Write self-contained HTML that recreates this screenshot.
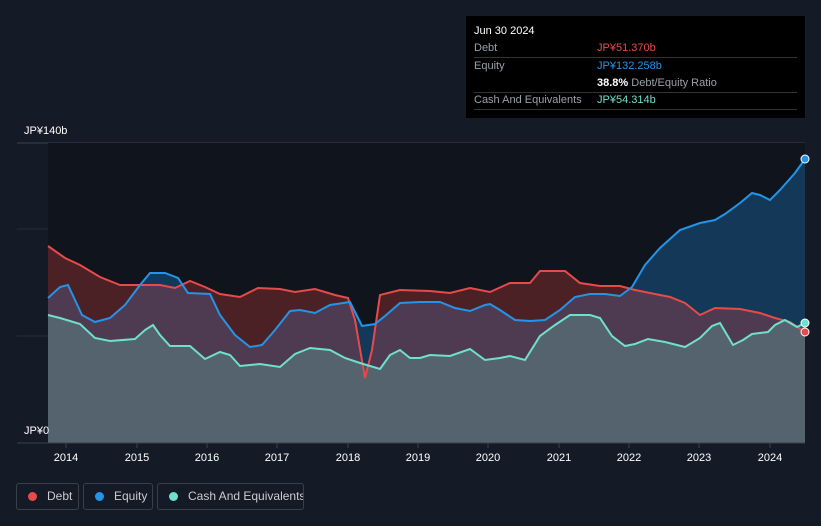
<!DOCTYPE html><html><head><style>
body{margin:0;width:821px;height:526px;background:#151b26;font-family:"Liberation Sans","Noto Sans CJK JP",sans-serif;overflow:hidden;position:relative}
.tt{position:absolute;left:466px;top:16px;width:339px;height:102px;background:#000;color:#fff;font-size:11px}
.tt .r{position:absolute;left:8px;right:8px;border-bottom:1px solid #333;height:17px;line-height:17px}
.tt .l{color:#9aa0a8}
.tt .v{position:absolute;left:123px;top:0}
.ax{position:absolute;color:#fff;font-size:11px}
.lg{position:absolute;top:483px;height:27px;border:1px solid #3a404a;border-radius:3px;color:#c8ccd2;font-size:12px;line-height:25px;box-sizing:border-box;white-space:nowrap;overflow:hidden}
.lg i{display:inline-block;width:9px;height:9px;border-radius:50%;margin:0 10px 0 11px;vertical-align:-1px}
</style></head><body>
<svg width="821" height="526" style="position:absolute;left:0;top:0">
<line x1="17" y1="143" x2="805" y2="143" stroke="#3a404a"/>
<line x1="17" y1="229" x2="805" y2="229" stroke="#262c36"/>
<line x1="17" y1="336" x2="805" y2="336" stroke="#262c36"/>
<rect x="48" y="143" width="757" height="300" fill="#10151d"/>
<polygon fill="rgba(33,150,243,0.28)" points="48,443 48,298 60,287 68,285 75,300 82,315 95,322 110,318 125,305 140,285 150,273 165,273 178,278 188,293 210,294 220,315 235,335 250,347 262,345 275,330 290,311 300,310 315,313 330,305 350,302 362,326 375,324 385,316 400,303 420,302 440,302 455,308 470,311 485,305 490,304 500,310 515,320 530,321 545,320 560,310 575,297 590,294 605,294 620,296 632,287 645,265 660,248 680,230 700,223 715,220 725,214 740,203 752,193 760,195 770,200 780,190 795,173 805,159 805,443"/>
<polygon fill="rgba(232,64,64,0.28)" points="48,443 48,246 65,258 80,265 100,277 120,285 140,285 160,285 175,288 190,281 205,287 220,294 240,297 258,288 280,289 295,292 315,289 335,295 348,298 355,320 365,378 372,350 380,295 400,290 430,291 450,293 470,288 490,292 510,283 530,283 540,271 565,271 580,283 600,286 620,286 635,290 650,293 670,297 685,303 700,315 715,308 740,309 760,313 775,318 790,322 805,332 805,443"/>
<polygon fill="rgba(100,220,200,0.25)" points="48,443 48,315 60,318 80,324 95,338 110,341 135,339 145,330 153,325 160,335 170,346 190,346 205,359 220,352 230,355 240,366 260,364 280,367 295,354 310,348 330,350 345,358 360,363 380,369 390,355 400,350 410,358 420,358 430,355 450,356 470,349 485,360 500,358 510,356 525,360 540,336 555,325 570,315 590,315 600,318 612,336 625,346 635,344 648,339 665,342 685,347 700,338 712,326 720,323 733,345 743,340 752,334 768,332 775,325 785,320 797,327 805,323 805,443"/>
<polyline fill="none" stroke="#e84a4a" stroke-width="2" points="48,246 65,258 80,265 100,277 120,285 140,285 160,285 175,288 190,281 205,287 220,294 240,297 258,288 280,289 295,292 315,289 335,295 348,298 355,320 365,378 372,350 380,295 400,290 430,291 450,293 470,288 490,292 510,283 530,283 540,271 565,271 580,283 600,286 620,286 635,290 650,293 670,297 685,303 700,315 715,308 740,309 760,313 775,318 790,322 805,332"/>
<polyline fill="none" stroke="#2394e8" stroke-width="2" points="48,298 60,287 68,285 75,300 82,315 95,322 110,318 125,305 140,285 150,273 165,273 178,278 188,293 210,294 220,315 235,335 250,347 262,345 275,330 290,311 300,310 315,313 330,305 350,302 362,326 375,324 385,316 400,303 420,302 440,302 455,308 470,311 485,305 490,304 500,310 515,320 530,321 545,320 560,310 575,297 590,294 605,294 620,296 632,287 645,265 660,248 680,230 700,223 715,220 725,214 740,203 752,193 760,195 770,200 780,190 795,173 805,159"/>
<polyline fill="none" stroke="#6ee0cc" stroke-width="2" points="48,315 60,318 80,324 95,338 110,341 135,339 145,330 153,325 160,335 170,346 190,346 205,359 220,352 230,355 240,366 260,364 280,367 295,354 310,348 330,350 345,358 360,363 380,369 390,355 400,350 410,358 420,358 430,355 450,356 470,349 485,360 500,358 510,356 525,360 540,336 555,325 570,315 590,315 600,318 612,336 625,346 635,344 648,339 665,342 685,347 700,338 712,326 720,323 733,345 743,340 752,334 768,332 775,325 785,320 797,327 805,323"/>
<circle cx="805" cy="159" r="4" fill="#2394e8" stroke="#fff" stroke-width="1"/>
<circle cx="805" cy="332" r="4" fill="#e84a4a" stroke="#fff" stroke-width="1"/>
<circle cx="805" cy="323" r="4" fill="#6ee0cc" stroke="#fff" stroke-width="1"/>
<line x1="17" y1="443" x2="805" y2="443" stroke="#3a404a"/>
<g stroke="#3a404a"><line x1="66" y1="443" x2="66" y2="448"/><line x1="137" y1="443" x2="137" y2="448"/><line x1="207" y1="443" x2="207" y2="448"/><line x1="277" y1="443" x2="277" y2="448"/><line x1="348" y1="443" x2="348" y2="448"/><line x1="418" y1="443" x2="418" y2="448"/><line x1="488" y1="443" x2="488" y2="448"/><line x1="559" y1="443" x2="559" y2="448"/><line x1="629" y1="443" x2="629" y2="448"/><line x1="699" y1="443" x2="699" y2="448"/><line x1="770" y1="443" x2="770" y2="448"/></g>
<g fill="#fff" font-size="11" text-anchor="middle" font-family="Liberation Sans,sans-serif"><text x="66" y="461">2014</text><text x="137" y="461">2015</text><text x="207" y="461">2016</text><text x="277" y="461">2017</text><text x="348" y="461">2018</text><text x="418" y="461">2019</text><text x="488" y="461">2020</text><text x="559" y="461">2021</text><text x="629" y="461">2022</text><text x="699" y="461">2023</text><text x="770" y="461">2024</text></g>
</svg>
<div class="ax" style="left:24px;top:125px">JP¥140b</div>
<div class="ax" style="left:24px;top:425px">JP¥0</div>
<div class="tt">
<div style="position:absolute;left:8px;top:9px">Jun 30 2024</div>
<div class="r" style="top:24px"><span class="l">Debt</span><span class="v" style="color:#e84a4a">JP¥51.370b</span></div>
<div class="r" style="top:42px;border:0"><span class="l">Equity</span><span class="v" style="color:#2394e8">JP¥132.258b</span></div>
<div class="r" style="top:59px"><span class="v"><b>38.8%</b> <span class="l">Debt/Equity Ratio</span></span></div>
<div class="r" style="top:76px"><span class="l">Cash And Equivalents</span><span class="v" style="color:#6ee0cc">JP¥54.314b</span></div>
</div>
<div class="lg" style="left:16px;width:63px"><i style="background:#e84a4a"></i>Debt</div>
<div class="lg" style="left:83px;width:70px"><i style="background:#2394e8"></i>Equity</div>
<div class="lg" style="left:157px;width:147px"><i style="background:#6ee0cc"></i>Cash And Equivalents</div>
</body></html>
